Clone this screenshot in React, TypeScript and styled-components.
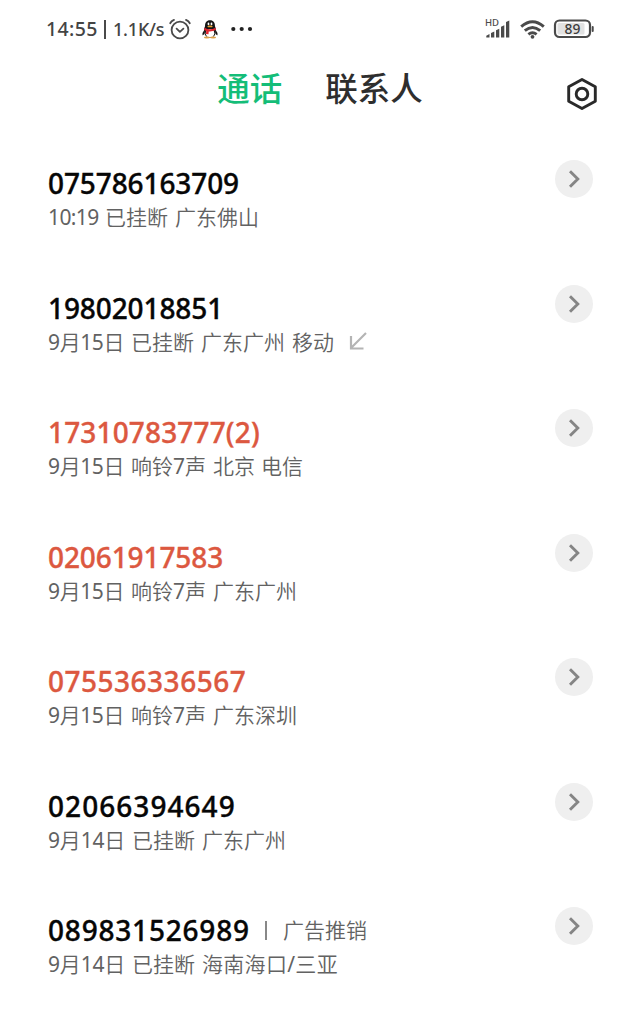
import React from "react";
import styled, { createGlobalStyle } from "styled-components";

const GlobalStyle = createGlobalStyle`
  * { box-sizing: border-box; }
  body {
    margin: 0;
    background: #fff;
    font-family: "Noto Sans", "Noto Sans CJK SC", sans-serif;
  }
`;

const Screen = styled.main`
  width: 640px;
  height: 1025px;
  overflow: hidden;
  background: #fff;
`;

const StatusBar = styled.div`
  display: flex;
  justify-content: space-between;
  align-items: center;
  height: 58px;
  padding: 0 45px 0 46px;
  color: #444;
`;

const StatusGroup = styled.div`
  display: flex;
  align-items: center;
`;

const Clock = styled.span`
  width: 54px;
  font: 500 19.5px/28px "Noto Sans", sans-serif;
  letter-spacing: 0.4px;
  white-space: nowrap;
`;

const Divider = styled.span`
  width: 2px;
  height: 19px;
  margin: 0 7px 0 4px;
  background: #4a4a4a;
`;

const Speed = styled.span`
  width: 53px;
  font: 500 18px/28px "Noto Sans", sans-serif;
  letter-spacing: -0.2px;
  white-space: nowrap;
`;

const Icon = styled.svg<{ $gap?: number }>`
  display: block;
  flex: none;
  margin-left: ${(p) => p.$gap ?? 0}px;
  overflow: visible;
`;

const Header = styled.header`
  display: grid;
  grid-template-columns: 1fr auto 1fr;
  height: 64px;
  padding: 6px 42px 0 42px;
`;

const Tabs = styled.nav`
  grid-column: 2;
  display: flex;
  gap: 43px;
`;

const Tab = styled.span<{ $active?: boolean }>`
  height: 46px;
  font: 500 32.5px/46px "Noto Sans CJK SC", sans-serif;
  color: ${(p) => (p.$active ? "#14bd78" : "#2e2e2e")};
`;

const SettingsButton = styled.button`
  justify-self: end;
  width: 32px;
  height: 34px;
  margin-top: 13px;
  padding: 0;
  border: 0;
  background: none;
`;

const CallList = styled.ul`
  margin: 0;
  padding: 0;
  list-style: none;
`;

const CallRow = styled.li`
  display: flex;
  justify-content: space-between;
  height: 124.5px;
  padding: 38px 47px 0 48px;
`;

const CallInfo = styled.div`
  padding-top: 5px;
`;

const NumberLine = styled.div`
  display: flex;
  align-items: center;
  height: 37px;
`;

const PhoneNumber = styled.span<{ $missed?: boolean; $width: number; $spacing: number }>`
  width: ${(p) => p.$width}px;
  height: 37px;
  font-size: 28px;
  line-height: 36px;
  font-weight: 500;
  -webkit-text-stroke: 0.35px currentColor;
  letter-spacing: ${(p) => p.$spacing}px;
  white-space: nowrap;
  color: ${(p) => (p.$missed ? "#dc5840" : "#060606")};
`;

const TagBar = styled.span`
  width: 2px;
  height: 19px;
  margin: 0 16px;
  background: #888;
`;

const Detail = styled.div`
  display: flex;
  align-items: center;
  height: 31px;
`;

const Word = styled.span<{ $width?: number; $spacing?: number }>`
  width: ${(p) => (p.$width ? `${p.$width}px` : "auto")};
  font-size: 21px;
  line-height: 31px;
  font-weight: 350;
  letter-spacing: ${(p) => p.$spacing ?? 0}px;
  white-space: nowrap;
  color: #626262;
`;

const Digits = styled.span`
  font-weight: 400;
`;

const MoreButton = styled.button`
  display: grid;
  place-items: center;
  width: 38px;
  height: 38px;
  padding: 0;
  border: 0;
  border-radius: 50%;
  background: #efefef;
`;

type Call = {
  number: string;
  width: number;
  spacing: number;
  missed?: boolean;
  tag?: string;
  outgoing?: boolean;
  words: [string, number?, number?][];
};

const calls: Call[] = [
  { number: "075786163709", width: 191, spacing: -0.1, words: [["10:19", 57, -0.6], ["已挂断", 70], ["广东佛山"]] },
  { number: "19802018851", width: 174, spacing: -0.1, outgoing: true, words: [["9月15日", 83, -0.4], ["已挂断", 70], ["广东广州", 91], ["移动", 42]] },
  { number: "17310783777(2)", width: 212, spacing: 0.15, missed: true, words: [["9月15日", 83, -0.4], ["响铃7声", 82], ["北京", 48], ["电信"]] },
  { number: "02061917583", width: 175, spacing: -0.1, missed: true, words: [["9月15日", 83, -0.4], ["响铃7声", 82], ["广东广州"]] },
  { number: "075536336567", width: 198, spacing: 0.5, missed: true, words: [["9月15日", 83, -0.4], ["响铃7声", 82], ["广东深圳"]] },
  { number: "02066394649", width: 187, spacing: 1.05, words: [["9月14日", 84, -0.2], ["已挂断", 70], ["广东广州"]] },
  { number: "089831526989", width: 201, spacing: 0.8, tag: "广告推销", words: [["9月14日", 84, -0.2], ["已挂断", 70], ["海南海口/三亚", undefined, 0.3]] },
];

function AlarmIcon() {
  return (
    <Icon $gap={3} width="22" height="22" viewBox="0 0 22 22" fill="none" stroke="#4a4a4a" strokeWidth="1.8" strokeLinecap="round" strokeLinejoin="round">
      <circle cx="11" cy="12" r="8.4" />
      <path d="M1.2 5.2Q2.400 3 5 1.900M20.800 5.200Q19.600 3 17 1.900M7.600 10.700l3.300 3.100 3.500-3.100" />
    </Icon>
  );
}

function PenguinIcon() {
  return (
    <Icon $gap={11} width="16" height="19" viewBox="0 0 16 19">
      <path d="M2.6 9.5Q0 12.8.5 15.2q1 .3 2-1.7M13.4 9.5q2.6 3.3 2.1 5.7-1 .3-2-1.7" fill="#151515" />
      <path d="M8 .3C4.5.3 3 2.8 3 6.2 1.7 8.7 1.8 12 3 15q2 3 5 3t5-3c1.200-3 1.300-6.300 0-8.800C13 2.800 11.500.3 8 .3Z" fill="#151515" />
      <ellipse cx="8" cy="13.2" rx="4.3" ry="4.2" fill="#fff" />
      <ellipse cx="4.900" cy="17.500" rx="3" ry="1" fill="#dda047" />
      <ellipse cx="11.100" cy="17.500" rx="3" ry="1" fill="#dda047" />
      <ellipse cx="6.500" cy="3.900" rx="0.900" ry="1.300" fill="#fff" />
      <ellipse cx="9.500" cy="3.900" rx="0.900" ry="1.300" fill="#fff" />
      <ellipse cx="8" cy="6.400" rx="2.700" ry="0.900" fill="#e0a030" />
      <path d="M2.500 7.800q5.500 3 11 0l.4 2.300q-3.500 1.700-7.200 1.400l-.2 2.700-2.500-.3.200-3-2-.8Z" fill="#df2631" />
    </Icon>
  );
}

function DotsIcon() {
  return (
    <Icon $gap={13} width="22" height="5" viewBox="0 0 22 5" fill="#222">
      <circle cx="2.300" cy="2" r="2.100" />
      <circle cx="10.700" cy="2" r="2.100" />
      <circle cx="19" cy="2" r="2.100" />
    </Icon>
  );
}

function SignalIcon() {
  return (
    <Icon width="26" height="20" viewBox="0 0 26 20" fill="#4a4a4a">
      <text x="0" y="7" fontFamily="Noto Sans, sans-serif" fontSize="9.500" fontWeight="500">HD</text>
      <path d="M1.300 18.500v-1.800l3.200-1.600v3.400ZM6 18.500V14l3.300-1.600v6.100ZM11 18.500v-7.200l3.300-1.600v8.800ZM16 18.500V7.800l3.300-1.600v12.300ZM21 18.500V3l3.300-1.600v17.100Z" />
    </Icon>
  );
}

function WifiIcon() {
  return (
    <Icon $gap={9} width="25" height="19" viewBox="0 0 25 19" fill="none" stroke="#4a4a4a" strokeWidth="2.900">
      <path d="M1.200 6.700Q12.500-3.300 23.800 6.700M4.800 10.700q7.700-6.600 15.400 0M8.400 14.300q4.100-3.300 8.200 0" />
      <circle cx="12.500" cy="16.800" r="1.900" fill="#4a4a4a" stroke="none" />
    </Icon>
  );
}

function BatteryIcon() {
  return (
    <Icon $gap={9} width="41" height="20" viewBox="0 0 41 20">
      <rect x="1" y="1.500" width="35" height="16.500" rx="4.500" fill="#fff" stroke="#4a4a4a" strokeWidth="2.200" />
      <rect x="3.500" y="4" width="27" height="11.500" rx="1.500" fill="#e2e2e2" />
      <path d="M38.700 8v4" stroke="#4a4a4a" strokeWidth="2" strokeLinecap="round" />
      <text x="18.500" y="14.700" textAnchor="middle" fontFamily="Noto Sans, sans-serif" fontSize="13.800" fontWeight="500" fill="#3c3c3c">89</text>
    </Icon>
  );
}

function HexIcon() {
  return (
    <Icon width="32" height="34" viewBox="0 0 32 34" fill="none" stroke="#292929" strokeWidth="2.900" strokeLinejoin="round">
      <path d="M16 2.500 29.300 9.700v14.600L16 31.500 2.700 24.300V9.700Z" />
      <circle cx="16" cy="17" r="5.800" />
    </Icon>
  );
}

function ChevronIcon() {
  return (
    <Icon width="12" height="18" viewBox="0 0 12 18" fill="none" stroke="#858585" strokeWidth="2.900">
      <path d="m2 1.300 7.800 7.700L2 16.700" />
    </Icon>
  );
}

function OutgoingIcon() {
  return (
    <Icon $gap={15} width="19" height="18" viewBox="0 0 19 18" fill="none" stroke="#b4b4b4" strokeWidth="2.200">
      <path d="M17 0 2.500 14.500M2 3v12.500h12.500" />
    </Icon>
  );
}

function MixedText({ text }: { text: string }) {
  return (
    <>
      {text.split(/([0-9:/]+)/).filter(Boolean).map((part, i) =>
        /[0-9:/]/.test(part) ? <Digits key={i}>{part}</Digits> : part
      )}
    </>
  );
}

export default function App() {
  return (
    <Screen>
      <GlobalStyle />
      <StatusBar>
        <StatusGroup>
          <Clock>14:55</Clock>
          <Divider />
          <Speed>1.1K/s</Speed>
          <AlarmIcon />
          <PenguinIcon />
          <DotsIcon />
        </StatusGroup>
        <StatusGroup>
          <SignalIcon />
          <WifiIcon />
          <BatteryIcon />
        </StatusGroup>
      </StatusBar>
      <Header>
        <Tabs>
          <Tab $active>通话</Tab>
          <Tab>联系人</Tab>
        </Tabs>
        <SettingsButton aria-label="设置"><HexIcon /></SettingsButton>
      </Header>
      <CallList>
        {calls.map((call) => (
          <CallRow key={call.number}>
            <CallInfo>
              <NumberLine>
                <PhoneNumber $missed={call.missed} $width={call.width} $spacing={call.spacing}>{call.number}</PhoneNumber>
                {call.tag && <><TagBar /><Word>{call.tag}</Word></>}
              </NumberLine>
              <Detail>
                {call.words.map(([text, width, spacing]) => (
                  <Word key={text} $width={width} $spacing={spacing}><MixedText text={text} /></Word>
                ))}
                {call.outgoing && <OutgoingIcon />}
              </Detail>
            </CallInfo>
            <MoreButton aria-label="详情"><ChevronIcon /></MoreButton>
          </CallRow>
        ))}
      </CallList>
    </Screen>
  );
}
